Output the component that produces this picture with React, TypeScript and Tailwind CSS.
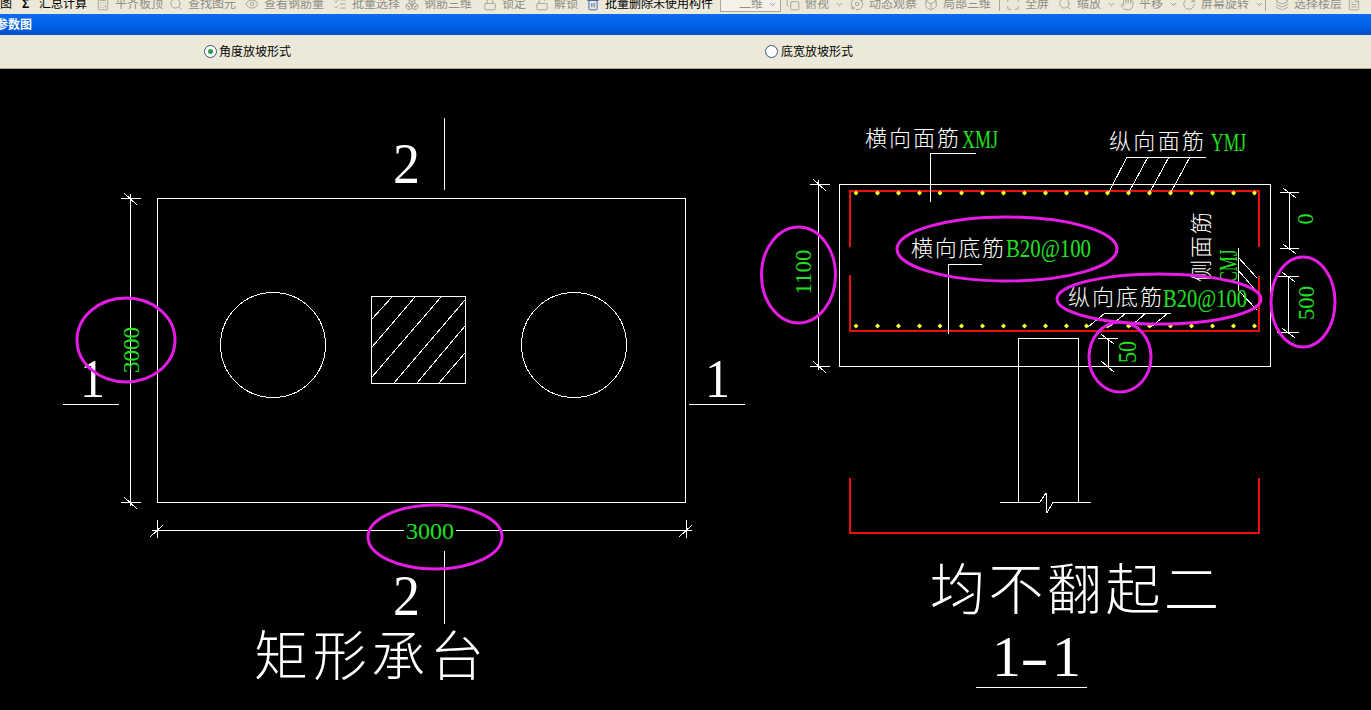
import { Calculator, Copy, Eye, Layers, Lock, Unlock, Maximize, Search, Hand, RotateCw, Box, Orbit, Trash2, FileText, Boxes, ListChecks, ChevronDown } from "lucide-react";
import type { ComponentType } from "react";

const FONT_UI = "font-['Liberation_Sans','Noto_Sans_CJK_SC',sans-serif]";
const SERIF = "'Liberation Serif', 'Noto Sans CJK SC', serif";
const CJK = "'Noto Sans CJK SC', sans-serif";
const GREEN = "#22e022";
const WHITE = "#ffffff";
const RED = "#e81010";
const MAGENTA = "#e41ce4";

type Tool = { label: string; icon: ComponentType<{ size?: number; strokeWidth?: number; className?: string }>; w: string; caret?: boolean; on?: boolean };

const LEFT_TOOLS: Tool[] = [
  { label: "平齐板顶", icon: Calculator, w: "w-[73px]" },
  { label: "查找图元", icon: Search, w: "w-[76px]" },
  { label: "查看钢筋量", icon: Eye, w: "w-[88px]" },
  { label: "批量选择", icon: ListChecks, w: "w-[72px]" },
  { label: "钢筋三维", icon: Boxes, w: "w-[78px]" },
  { label: "锁定", icon: Lock, w: "w-[52px]" },
  { label: "解锁", icon: Unlock, w: "w-[51px]" },
  { label: "批量删除未使用构件", icon: Trash2, w: "w-[134px]", on: true },
];

const VIEW_TOOLS: Tool[] = [
  { label: "俯视", icon: Copy, w: "w-[64px]", caret: true },
  { label: "动态观察", icon: Orbit, w: "w-[74px]" },
  { label: "局部三维", icon: Box, w: "w-[75px]" },
];

const ZOOM_TOOLS: Tool[] = [
  { label: "全屏", icon: Maximize, w: "w-[52px]" },
  { label: "缩放", icon: Search, w: "w-[62px]", caret: true },
  { label: "平移", icon: Hand, w: "w-[62px]", caret: true },
  { label: "屏幕旋转", icon: RotateCw, w: "w-[83px]", caret: true },
];

const ToolItem = ({ tool }: { tool: Tool }) => {
  const Icon = tool.icon;
  return (
    <div className={`flex items-center shrink-0 ${tool.w}`}>
      <div className="w-[19px] shrink-0">
        <Icon size={14} strokeWidth={1.6} className={tool.on ? "text-[#3a5fa8]" : "text-[#a3a297]"} />
      </div>
      <span className={tool.on ? "text-black whitespace-nowrap" : "text-[#8f8e85] whitespace-nowrap"}>{tool.label}</span>
      {tool.caret && <ChevronDown size={9} strokeWidth={2.4} className="ml-[6px] text-[#8f8e85]" />}
    </div>
  );
};

const Radio = ({ checked }: { checked?: boolean }) => (
  <span className="flex h-[13px] w-[13px] items-center justify-center rounded-full border border-[#2b5a80] bg-white">
    {checked && <span className="h-[5px] w-[5px] rounded-full bg-[#2f9e44]" />}
  </span>
);

const TOP_DOTS = [856, 877.5, 898.5, 919.5, 940, 961.5, 982.5, 1003.5, 1024.5, 1045.5, 1066.5, 1086.5, 1107.5, 1128.5, 1149.5, 1170.5, 1191.5, 1212.5, 1233.5, 1254.5];

// simple helpers so the drawing below stays readable
const L = ({ d, c = WHITE }: { d: string; c?: string }) => <path d={d} fill="none" stroke={c} strokeWidth={1} shapeRendering="crispEdges" />;

const T = ({ x, y, len, size, text, c = WHITE, cjk }: { x: number; y: number; len: number; size: number; text: string; c?: string; cjk?: boolean }) => (
  <text x={x} y={y} fill={c} fontSize={size} fontFamily={cjk ? CJK : SERIF} textLength={len} lengthAdjust={cjk ? "spacing" : "spacingAndGlyphs"} fontWeight={cjk ? 300 : 400}>
    {text}
  </text>
);

const R = ({ cx, cy, len, size, text, c = GREEN, cjk }: { cx: number; cy: number; len: number; size: number; text: string; c?: string; cjk?: boolean }) => (
  <g transform={`translate(${cx} ${cy}) rotate(-90)`}>
    <T x={-len / 2} y={size * 0.33} len={len} size={size} text={text} c={c} cjk={cjk} />
  </g>
);

const VTick = (x: number, y: number) => `M${x - 9} ${y}H${x + 11}M${x - 6} ${y - 5}L${x + 7} ${y + 7}`;

const Drawing = () => (
  <svg viewBox="0 69 1371 641" className="block h-full w-full">
    {/* left plan */}
    <L d="M157 198H685V502H157Z" />
    <L d={`M130 194V506${VTick(130, 198)}${VTick(130, 502)}`} />
    <L d="M152 530H404M456 530H692M157 520V538M686 520V538M150 537L163 525M679 537L692 525" />
    <circle cx={273} cy={345} r={52.5} fill="none" stroke={WHITE} shapeRendering="crispEdges" />
    <circle cx={574} cy={345} r={52.5} fill="none" stroke={WHITE} shapeRendering="crispEdges" />
    <L d="M371 296H465V383H371Z" />
    <L d="M372 319L392 297M372 347L415 297M372 377L441 297M394 383L465 300M417 383L465 326M439 383L465 353" />
    <L d="M63 404H119M689 404H745M444 118V190M444 551V624" />
    <T x={80} y={397} len={25} size={55} text="1" />
    <T x={705} y={397} len={25} size={55} text="1" />
    <T x={393} y={183} len={27} size={58} text="2" />
    <T x={393} y={615} len={27} size={58} text="2" />
    <T x={254} y={676} len={230} size={54} text="矩形承台" cjk />
    <R cx={131} cy={350} len={46} size={24} text="3000" />
    <T x={406} y={539} len={48} size={24} text="3000" c={GREEN} />

    {/* right section */}
    <L d="M839 184H1270V366H839Z" />
    <L d={`M818 180V370${VTick(819, 184)}${VTick(819, 366)}`} />
    <path d="M850 247V191H1259V247M850 275V331H1259V276" fill="none" stroke={RED} strokeWidth={2} shapeRendering="crispEdges" />
    <path d="M850 478V533H1259V478" fill="none" stroke={RED} strokeWidth={2} shapeRendering="crispEdges" />
    {TOP_DOTS.map(x => (
      <g key={x} fill="#ffff30">
        <path d={`M${x} 190.5L${x + 2.5} 193L${x} 195.5L${x - 2.5} 193Z`} />
        <path d={`M${x} 323.5L${x + 2.5} 326L${x} 328.5L${x - 2.5} 326Z`} />
      </g>
    ))}
    <L d="M930 153H976M930 153V202" />
    <L d="M1127 157H1206M1127 157L1109 192M1148 157L1129 192M1169 157L1150 192M1190 157L1171 192" />
    <L d="M948 264H982M948 264V334" />
    <L d="M1105 313H1171M1105 313L1088 327M1126 313L1109 327M1146 313L1130 327M1168 313L1151 327" />
    <L d="M1238 248V290M1238 257L1257 278M1238 270L1257 292M1238 290L1257 310" />
    <L d="M1018 502V338H1078V502M1000 502H1040L1046 493L1047 513L1053 502H1091" />
    <L d={`M1108 338V366M1098 338H1118M1101 334L1114 344M1098 366H1118M1101 361L1114 372`} />
    <L d="M1289 192V248M1280 192H1299M1283 188L1296 198M1280 248H1299M1283 244L1296 254" />
    <L d="M1288 276V332M1277 276H1299M1282 272L1295 282M1277 332H1299M1282 328L1295 338" />

    <T x={865} y={146} len={94} size={22} text="横向面筋" cjk />
    <T x={962} y={148} len={36} size={26} text="XMJ" c={GREEN} />
    <T x={1109} y={149} len={95} size={22} text="纵向面筋" cjk />
    <T x={1211} y={151} len={35} size={26} text="YMJ" c={GREEN} />
    <T x={911} y={256} len={93} size={22} text="横向底筋" cjk />
    <T x={1006} y={257} len={85} size={25} text="B20@100" c={GREEN} />
    <T x={1068} y={305} len={94} size={22} text="纵向底筋" cjk />
    <T x={1163} y={307} len={84} size={25} text="B20@100" c={GREEN} />
    <R cx={1202} cy={247} len={70} size={22} text="侧面筋" c={WHITE} cjk />
    <R cx={1228} cy={266} len={33} size={26} text="CMJ" />
    <R cx={803} cy={272} len={45} size={24} text="1100" />
    <R cx={1127} cy={352} len={22} size={26} text="50" />
    <R cx={1305} cy={219} len={11} size={24} text="0" />
    <R cx={1306} cy={303} len={34} size={24} text="500" />

    <T x={930} y={609} len={289} size={55} text="均不翻起二" cjk />
    <text y={676} fill={WHITE} fontSize={58} fontFamily={SERIF}>
      <tspan x={992}>1</tspan>
      <tspan x={1020} textLength={29} lengthAdjust="spacingAndGlyphs">-</tspan>
      <tspan x={1052}>1</tspan>
    </text>
    <L d="M976 687H1087" />

    {/* markup ellipses */}
    <g fill="none" stroke={MAGENTA} strokeWidth={3}>
      <ellipse cx={126} cy={340} rx={49} ry={42} />
      <ellipse cx={435} cy={537} rx={67} ry={32} />
      <ellipse cx={798.5} cy={275} rx={37} ry={48} />
      <ellipse cx={1007} cy={249} rx={110} ry={32} />
      <ellipse cx={1159} cy={299} rx={102} ry={25} />
      <ellipse cx={1120} cy={357} rx={31} ry={35} />
      <ellipse cx={1303} cy={302} rx={32} ry={45} />
    </g>
  </svg>
);

export default function App() {
  return (
    <div className={`flex h-screen w-full flex-col overflow-hidden bg-black text-[12px] ${FONT_UI}`}>
      {/* toolbar, cut off by the top of the picture */}
      <div className="h-[14px] shrink-0 overflow-hidden bg-[#ece9d8]">
        <div className="-mt-[4px] flex h-[16px] items-center">
          <span className="w-[22px] shrink-0 text-black">图</span>
          <div className="flex w-[74px] shrink-0 items-center text-black">
            <span className="w-[17px] font-bold">Σ</span>
            <span className="whitespace-nowrap">汇总计算</span>
          </div>
          {LEFT_TOOLS.map(t => <ToolItem key={t.label} tool={t} />)}
          <div className="mr-[5px] flex h-[16px] w-[61px] shrink-0 items-center border border-[#aca899] bg-[#f4f2e8] pl-[18px] text-[#8f8e85]">
            <span className="whitespace-nowrap">二维</span>
            <ChevronDown size={9} strokeWidth={2.4} className="ml-[5px] shrink-0" />
          </div>
          {VIEW_TOOLS.map(t => <ToolItem key={t.label} tool={t} />)}
          <div className="mr-[6px] h-[14px] w-px shrink-0 bg-[#aca899]" />
          {ZOOM_TOOLS.map(t => <ToolItem key={t.label} tool={t} />)}
          <div className="mr-[9px] h-[14px] w-px shrink-0 bg-[#aca899]" />
          <ToolItem tool={{ label: "选择楼层", icon: Layers, w: "w-[72px]" }} />
          <FileText size={14} strokeWidth={1.6} className="shrink-0 text-[#a3a297]" />
        </div>
      </div>

      {/* title bar */}
      <div className="flex h-[21px] shrink-0 items-center bg-gradient-to-b from-[#0a6cf0] via-[#0063e6] to-[#0050cc]">
        <span className="-ml-[4px] font-bold text-white">参数图</span>
      </div>

      {/* option bar */}
      <div className="flex h-[34px] shrink-0 items-center border-b border-[#aca899] bg-[#ece9d8] pl-[204px] text-black">
        <div className="flex w-[561px] items-center gap-[2px]">
          <Radio checked />
          <span>角度放坡形式</span>
        </div>
        <div className="flex items-center gap-[3px]">
          <Radio />
          <span>底宽放坡形式</span>
        </div>
      </div>

      <div className="min-h-0 flex-1">
        <Drawing />
      </div>
    </div>
  );
}
